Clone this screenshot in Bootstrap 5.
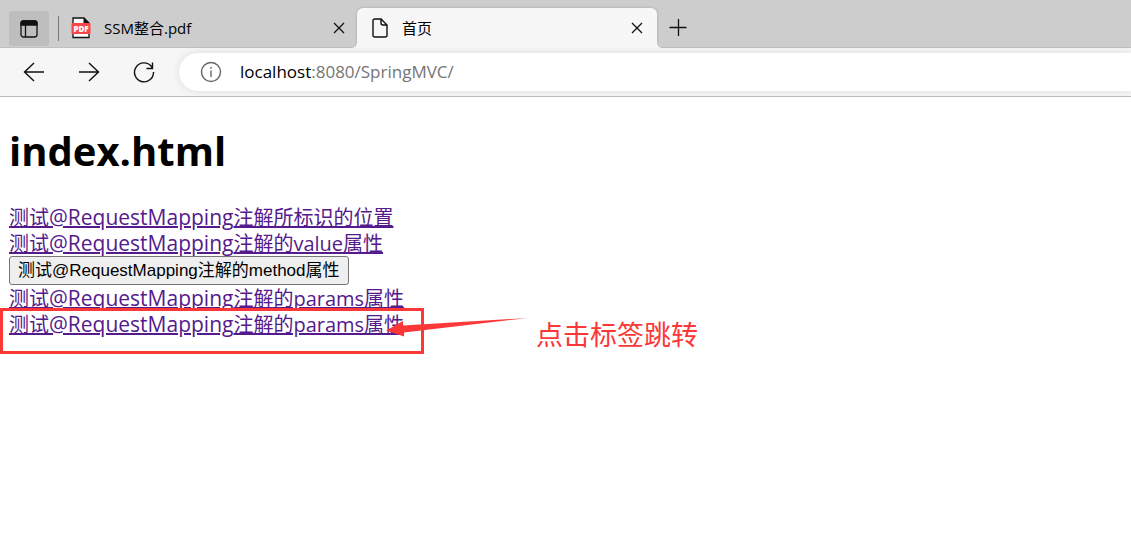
<!DOCTYPE html>
<html lang="zh-CN">
<head>
<meta charset="utf-8">
<meta name="viewport" content="width=device-width, initial-scale=1">
<title>首页</title>
<link href="https://cdn.jsdelivr.net/npm/bootstrap@5.3.0/dist/css/bootstrap.min.css" rel="stylesheet">
<style>
  body { font-family: "Open Sans", "Noto Sans CJK SC", sans-serif; color: #000; background: #fff; }
  svg { display: block; fill: none; stroke: #111; }
  .tab-strip { height: 48px; background: #cdcdcd; border-bottom: 1px solid #c0c0c0; padding-left: 9px; }
  .icon-btn { border: 0; background: transparent; padding: 0; color: #111; }
  .tab-actions { width: 40px; height: 35px; margin-top: 11px; background: #bebebe; border-radius: 3px; }
  .tab-divider { width: 1px; height: 25px; margin: 16px 0 0 9px; background: #777; }
  .browser-tab { width: 300px; height: 40px; margin-top: 8px; font-size: 15px; line-height: 20px; }
  .browser-tab a { color: #000; margin-left: 13px; }
  .pdf-tab { width: 298px; padding: 0 12px; }
  .open-tab { position: relative; padding: 0 14px; background: #f7f7f7; border-radius: 6px 6px 0 0; box-shadow: 0 0 3px #0003; clip-path: inset(-3px -6px 0 -6px); }
  .open-tab::before, .open-tab::after { content: ""; position: absolute; bottom: 0; width: 5px; height: 5px; }
  .open-tab::before { right: 100%; background: radial-gradient(circle at 0 0, #cdcdcd 5px, #f7f7f7 5px); }
  .open-tab::after { left: 100%; background: radial-gradient(circle at 100% 0, #cdcdcd 5px, #f7f7f7 5px); }
  .new-tab { margin: 8px 0 0 11px; }
  .tool-bar { height: 49px; background: #f6f6f6; border-bottom: 1px solid #bbb; padding-left: 22px; }
  .tool-bar .icon-btn { margin-right: 31px; }
  .address { height: 38px; border-radius: 19px 0 0 19px; background: #fff; padding-left: 21px; box-shadow: 0 0 8px #0000001a; font-size: 17px; margin-left: -8px; }
  .address span { color: #757575; }
  .info-icon { stroke: #666; margin-right: 18px; }
  .page { padding: 30px 9px 0; font-size: 20px; line-height: 26px; }
  .page h1 { font-size: 40px; font-weight: 700; line-height: 48px; margin: 0 0 29px; }
  .page a { color: #551a8b; text-underline-offset: 1px; text-decoration-thickness: 2px; }
  .page .row-link { height: 26px; }
  .latin { font-size: 21px; }
  .form-btn { height: 29px; padding: 0 8px; border: 1px solid #767676; border-radius: 3px; background: #efefef; color: #000; font: 17px/26px "Liberation Sans", "Noto Sans CJK SC", sans-serif; }
  .marked { position: relative; }
  .mark-box { position: absolute; left: -9px; top: -3px; width: 424px; height: 46px; border: 3px solid #fc3737; pointer-events: none; }
  .mark-arrow { position: absolute; left: 376px; top: 4px; pointer-events: none; }
  .mark-note { position: absolute; left: 527px; top: 6px; color: #fc3737; font-size: 27px; line-height: 36px; white-space: nowrap; }
</style>
</head>
<body class="min-vh-100">
<header>
  <nav class="tab-strip d-flex align-items-start" aria-label="标签页">
    <button class="icon-btn tab-actions d-flex align-items-center justify-content-center" type="button" aria-label="标签操作菜单">
      <svg width="18" height="18" viewBox="0 0 18 18" stroke-width="1.3"><rect x="1" y="1" width="16" height="16" rx="2.5"/><path d="M1 5V3Q1 1 3 1H15Q17 1 17 3V5Z" fill="#111"/><path d="M5.5 5V17"/></svg>
    </button>
    <div class="tab-divider"></div>
    <div class="browser-tab pdf-tab d-flex align-items-center">
      <svg width="20" height="22" viewBox="0 0 20 22"><path d="M2 1H13L18 6V20.500H2Z" fill="#fff" stroke-width="1.300"/><path d="M13 1V6H18Z" fill="#111"/><rect x=".5" y="6" width="19" height="11" rx="1" fill="#f94748" stroke="none"/><text x="10" y="14.500" text-anchor="middle" font-size="8" font-weight="800" fill="#fff" stroke="none">PDF</text></svg>
      <a class="text-decoration-none flex-grow-1" href="#">SSM整合.pdf</a>
      <button class="icon-btn" type="button" aria-label="关闭 SSM整合.pdf"><svg width="12" height="12" viewBox="0 0 12 12" stroke-width="1.300"><path d="M1 1 11 11M11 1 1 11"/></svg></button>
    </div>
    <div class="browser-tab open-tab d-flex align-items-center">
      <svg width="18" height="20" viewBox="0 0 18 20" stroke-width="1.400"><path d="M4 1H10L16 7V17Q16 19 14 19H4Q2 19 2 17V3Q2 1 4 1Z M10 1V5Q10 7 12 7H16"/></svg>
      <a class="text-decoration-none flex-grow-1" href="#">首页</a>
      <button class="icon-btn" type="button" aria-label="关闭 首页"><svg width="12" height="12" viewBox="0 0 12 12" stroke-width="1.300"><path d="M1 1 11 11M11 1 1 11"/></svg></button>
    </div>
    <button class="icon-btn new-tab" type="button" aria-label="新建标签页"><svg width="20" height="40" viewBox="0 0 20 40" stroke-width="1.300"><path d="M1.500 19.500H18.500M10.500 11V28"/></svg></button>
  </nav>
  <div class="tool-bar d-flex align-items-center">
    <button class="icon-btn" type="button" aria-label="后退"><svg width="24" height="24" viewBox="0 0 24 24" stroke-width="1.400"><path d="M22 12H2.500M12 3 2.500 12 12 21"/></svg></button>
    <button class="icon-btn" type="button" aria-label="前进"><svg width="24" height="24" viewBox="0 0 24 24" stroke-width="1.400"><path d="M2 12H21.500M12 3 21.500 12 12 21"/></svg></button>
    <button class="icon-btn" type="button" aria-label="刷新"><svg width="24" height="24" viewBox="0 0 24 24" stroke-width="1.400"><path d="M21.500 12A9.500 9.500 0 1 1 19.500 6.500L20.500 8M20.500 2.500V8.500H14.500"/></svg></button>
    <div class="address d-flex align-items-center flex-grow-1">
      <svg class="info-icon" width="22" height="22" viewBox="0 0 22 22" stroke-width="1.400"><circle cx="11" cy="11" r="9.500"/><path d="M11 9.500V16M11 6V7.800"/></svg>
      <div>localhost<span>:8080/SpringMVC/</span></div>
    </div>
  </div>
</header>
<main class="page">
  <h1>index.html</h1>
  <div class="row-link"><a href="#">测试<span class="latin">@RequestMapping</span>注解所标识的位置</a></div>
  <div class="row-link"><a href="#">测试<span class="latin">@RequestMapping</span>注解的value属性</a></div>
  <form class="d-flex"><button class="form-btn" type="button">测试@RequestMapping注解的method属性</button></form>
  <div class="row-link"><a href="#">测试<span class="latin">@RequestMapping</span>注解的params属性</a></div>
  <div class="row-link marked">
    <a href="#">测试<span class="latin">@RequestMapping</span>注解的params属性</a>
    <div class="mark-box"></div>
    <svg class="mark-arrow" width="144" height="26" viewBox="0 0 144 26"><path d="M1 15.500 18 6V10.500L143 3 19 17.500V21.500Z" fill="#fc3737" stroke="none"/></svg>
    <span class="mark-note">点击标签跳转</span>
  </div>
</main>
<script src="https://cdn.jsdelivr.net/npm/bootstrap@5.3.0/dist/js/bootstrap.bundle.min.js"></script>
</body>
</html>
